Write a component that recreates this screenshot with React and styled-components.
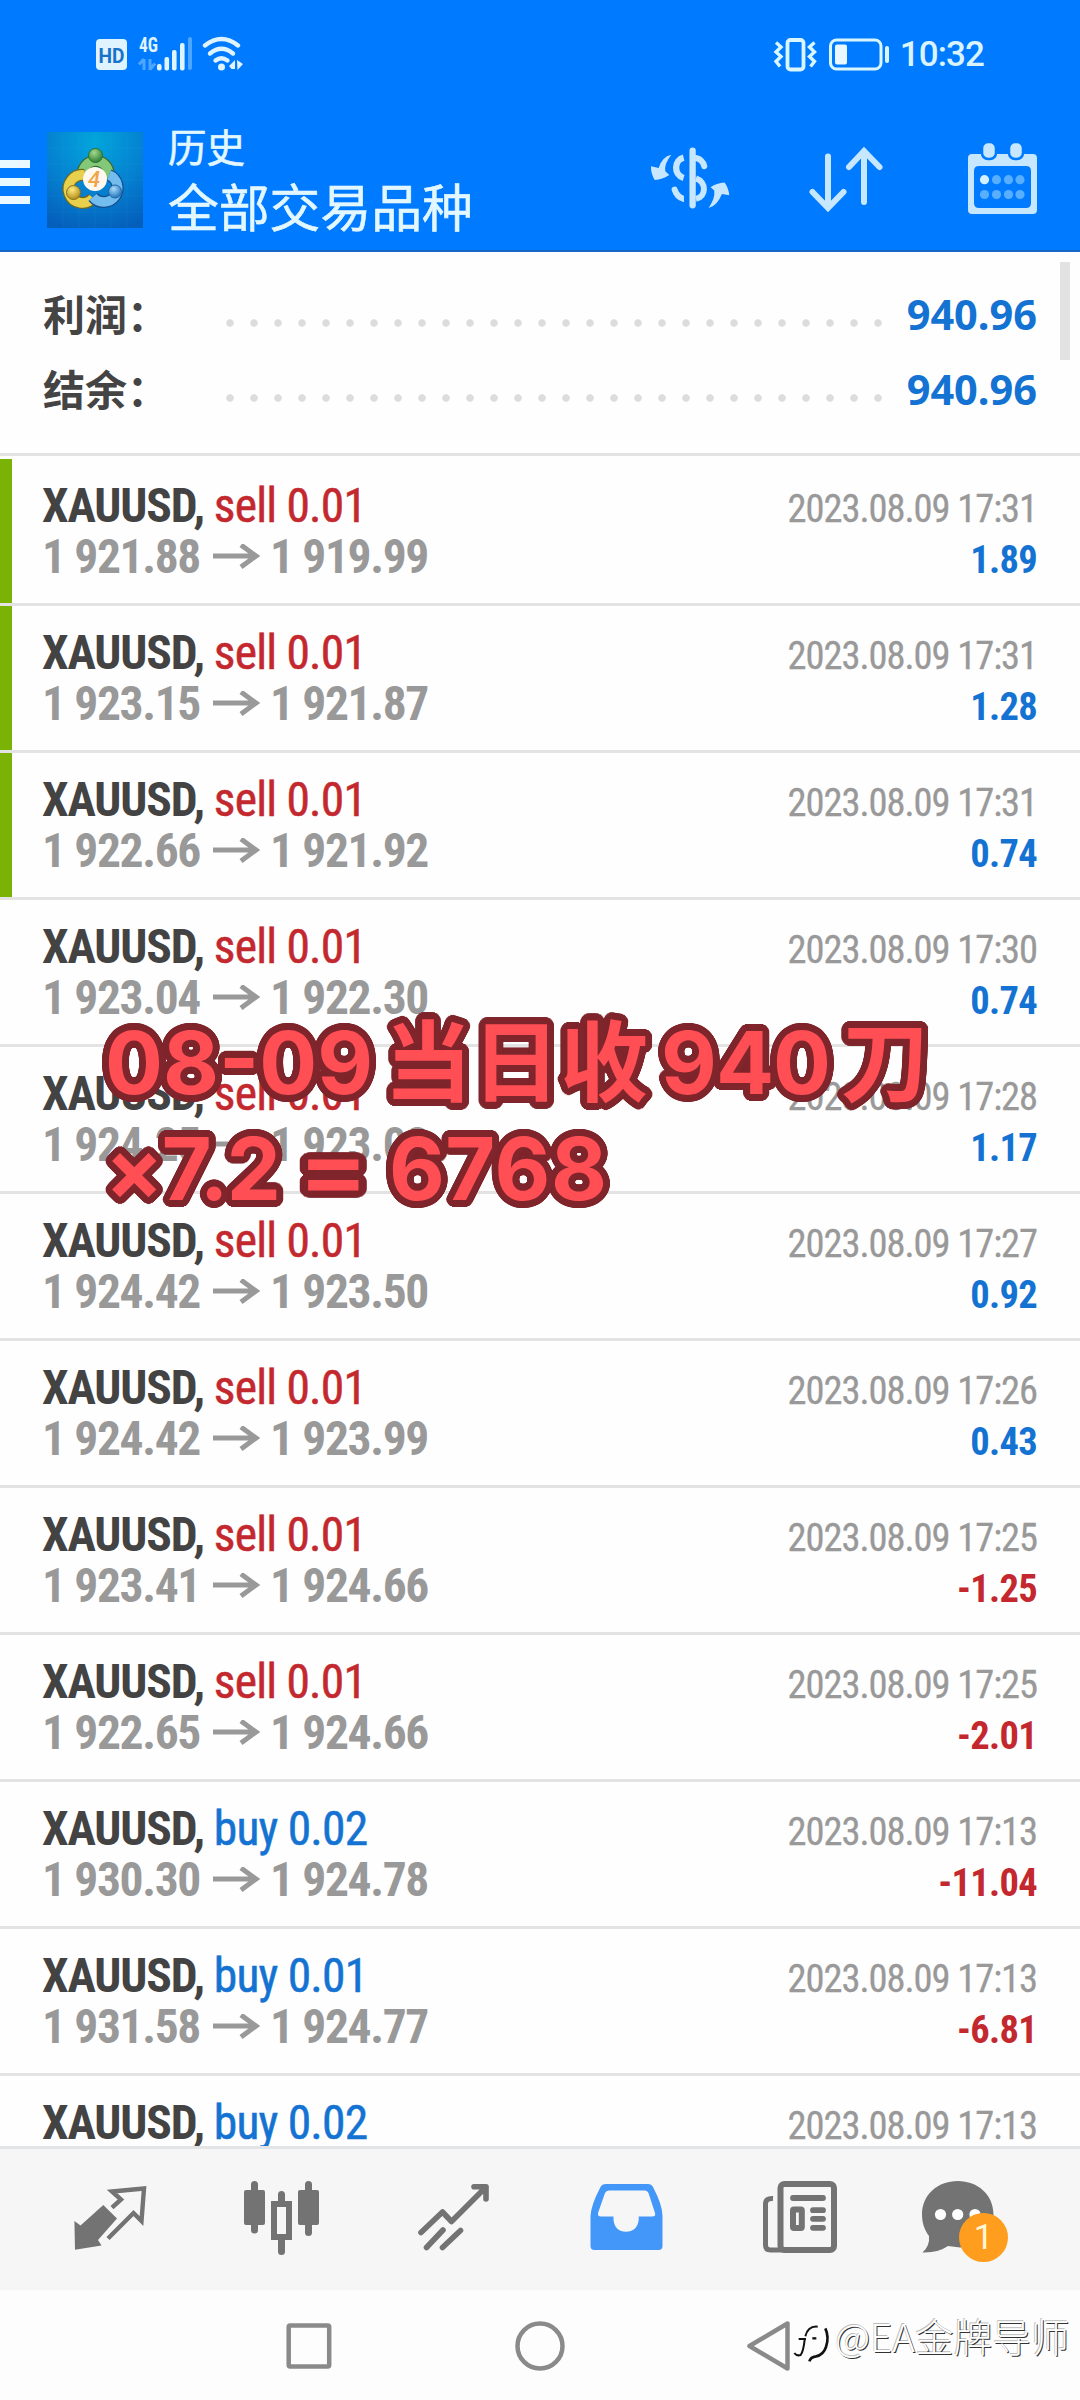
import React from 'react';
import styled, { createGlobalStyle } from 'styled-components';

const GlobalStyle = createGlobalStyle`
  * { box-sizing: border-box; }
  body {
    margin: 0;
    background: #fdfdfd;
    font-family: Roboto, 'Noto Sans CJK SC', sans-serif;
  }
  svg { display: block; flex: none; }
`;

const Screen = styled.div`
  position: relative;
  display: flex;
  flex-direction: column;
  width: 1080px;
  height: 2400px;
  overflow: hidden;
`;

const Header = styled.header`
  height: 252px;
  background: #007aff;
  border-bottom: 2px solid #1566c6;
`;

const StatusBar = styled.div`
  display: flex;
  justify-content: space-between;
  height: 108px;
  padding: 32px 96px 0 92px;
`;

const StatusGroup = styled.div`
  display: flex;
  height: 44px;
`;

const Clock = styled.span`
  margin-left: 8px;
  font-size: 35px;
  font-weight: 500;
  line-height: 46px;
  letter-spacing: -0.9px;
  color: #d9f3ff;
`;

const TitleBar = styled.div`
  display: flex;
  height: 142px;
`;

const MenuButton = styled.div`
  display: flex;
  flex-direction: column;
  gap: 10px;
  width: 30px;
  margin: 52px 17px 0 0;

  span {
    height: 8px;
    background: #eaf8ff;
  }
`;

const Logo = styled.div`
  margin-top: 24px;
`;

const Titles = styled.div`
  flex: 1;
  margin-left: 25px;
  padding-top: 11px;
  color: #e2f7ff;
  font-family: 'Noto Sans CJK SC', sans-serif;
`;

const Title = styled.div`
  font-size: ${(p) => p.$size}px;
  line-height: ${(p) => p.$line}px;
  -webkit-text-stroke: 0.6px #e2f7ff;
`;

const Actions = styled.div`
  display: flex;
  padding: 32px 38px 0 0;
`;

const Summary = styled.section`
  position: relative;
  height: 204px;
  padding: 25px 43px 0 43px;
  background: #fefefe;
  border-bottom: 3px solid #e3e3e3;
`;

const SummaryRow = styled.div`
  display: flex;
  height: 75px;
  line-height: 75px;
  font-size: 42px;
  font-weight: 700;
  font-family: 'Noto Sans CJK SC', sans-serif;
  color: #444;
`;

const SummaryLabel = styled.span`
  width: 175px;
  line-height: 72px;
`;

const Dots = styled.span`
  width: 672px;
  height: 24px;
  margin-top: 34px;
  background: radial-gradient(circle, #dcdcdc 3.3px, transparent 4.2px) 0 0 / 24px 24px;
`;

const Total = styled.span`
  flex: 1;
  text-align: right;
  font-family: 'Noto Sans', sans-serif;
  font-size: 41.5px;
  color: #1473d2;
`;

const ScrollThumb = styled.div`
  position: absolute;
  top: 10px;
  right: 10px;
  width: 10px;
  height: 98px;
  background: #e2e2e2;
`;

const DealList = styled.section`
  flex: 1;
  min-height: 0;
  padding-top: 3px;
  overflow: hidden;
  background: #fefefe;
  font-family: 'Roboto Condensed', Roboto, sans-serif;
`;

const Deal = styled.div`
  height: 147px;
  padding: 22px 43px 0 42px;
  border-bottom: 3px solid #e3e3e3;
  box-shadow: inset ${(p) => (p.$marked ? 12 : 0)}px 0 #7ab305;
`;

const Line = styled.div`
  display: flex;
  align-items: baseline;
  height: 51px;
  line-height: 50px;
  font-size: 47.5px;
  white-space: pre;
`;

const Symbol = styled.b`
  color: #434343;
  letter-spacing: -1.15px;
`;

const Volume = styled.span`
  flex: 1;
  color: ${(p) => (p.$side === 'buy' ? '#1473d2' : '#c4282f')};
  letter-spacing: -0.8px;
  -webkit-text-stroke: 0.5px;
`;

const Price = styled.b`
  color: #999;
  letter-spacing: -1.35px;
`;

const ArrowRight = styled.svg`
  margin: 0 10px 0 12px;
  fill: none;
  stroke: #999;
  stroke-width: 5;
`;

const Time = styled.span`
  margin-left: auto;
  font-size: 38.5px;
  letter-spacing: -1.05px;
  color: #999;
  -webkit-text-stroke: 0.3px;
`;

const Profit = styled.b`
  margin-left: auto;
  font-size: 38.5px;
  letter-spacing: -0.7px;
  color: ${(p) => (p.$loss ? '#c4282f' : '#1473d2')};
`;

const TabBar = styled.nav`
  display: flex;
  height: 144px;
  padding: 32px 0 0 72px;
  background: #f6f6f6;
  border-top: 3px solid #e2e4e5;
`;

const Tab = styled.div`
  position: relative;
  width: ${(p) => p.$width}px;
`;

const Badge = styled.span`
  position: absolute;
  left: 39px;
  top: 32px;
  width: 49px;
  height: 49px;
  border-radius: 50%;
  background: #ff9d1e;
  color: #fff6d8;
  font-size: 35px;
  line-height: 49px;
  text-align: center;
`;

const SystemNav = styled.div`
  display: flex;
  height: 110px;
  padding: 29px 0 0 284px;
  background: #fdfdfd;
`;

const NavKey = styled.div`
  width: ${(p) => p.$width}px;
`;

// a ring of hard shadows gives the caption an outline with round corners
const outline = (radius, color) =>
  Array.from({ length: 36 }, (_, i) => {
    const a = (i * Math.PI) / 18;
    return `${(radius * Math.cos(a)).toFixed(1)}px ${(radius * Math.sin(a)).toFixed(1)}px 0 ${color}`;
  }).join(', ');

const Caption = styled.div`
  position: absolute;
  left: 105px;
  top: 1002px;
  display: flex;
  flex-direction: column;
  gap: 7px;
  font-family: Inter, 'Noto Sans CJK SC', sans-serif;
  font-size: 86px;
  font-weight: 700;
  color: #ff4f55;
  white-space: pre;
  text-shadow: ${outline(6.8, '#7f252b')};
`;

const CaptionLine = styled.div`
  display: flex;
  align-items: baseline;
  height: 107px;
  line-height: 107px;
`;

const CaptionPart = styled.span`
  margin-left: ${(p) => p.$gap || 0}px;
  letter-spacing: ${(p) => p.$track || 0}px;
`;

const CaptionHan = styled(CaptionPart)`
  font-family: 'Noto Sans CJK SC', sans-serif;
  font-size: 88px;
`;

const CaptionSign = styled(CaptionPart)`
  transform: scaleX(1.2);
`;

const Watermark = styled.div`
  position: absolute;
  left: 793px;
  top: 2312px;
  display: flex;
  font-family: 'Noto Sans CJK SC', sans-serif;
  font-size: 38.6px;
  font-weight: 300;
  line-height: 46px;
  color: #fff;
  text-shadow: 1px 1px 0 #333, -0.6px -0.6px 0 #bbb;
`;

const deals = [
  ['sell', '0.01', '1 921.88', '1 919.99', '17:31', '1.89', true],
  ['sell', '0.01', '1 923.15', '1 921.87', '17:31', '1.28', true],
  ['sell', '0.01', '1 922.66', '1 921.92', '17:31', '0.74', true],
  ['sell', '0.01', '1 923.04', '1 922.30', '17:30', '0.74'],
  ['sell', '0.01', '1 924.25', '1 923.08', '17:28', '1.17'],
  ['sell', '0.01', '1 924.42', '1 923.50', '17:27', '0.92'],
  ['sell', '0.01', '1 924.42', '1 923.99', '17:26', '0.43'],
  ['sell', '0.01', '1 923.41', '1 924.66', '17:25', '-1.25'],
  ['sell', '0.01', '1 922.65', '1 924.66', '17:25', '-2.01'],
  ['buy', '0.02', '1 930.30', '1 924.78', '17:13', '-11.04'],
  ['buy', '0.01', '1 931.58', '1 924.77', '17:13', '-6.81'],
  ['buy', '0.02', '', '', '17:13', ''],
];

function NetworkIcons() {
  return (
    <svg width="160" height="44" viewBox="92 32 160 44" fill="#dff4ff">
      <rect x="96" y="39" width="31" height="31" rx="4" />
      <text x="111.5" y="62.5" fontSize="21" fontWeight="700" textAnchor="middle" fill="#1a73c9" textLength="26" lengthAdjust="spacingAndGlyphs" fontFamily="Roboto">HD</text>
      <text x="139" y="52" fontSize="21" fontWeight="700" textLength="19" lengthAdjust="spacingAndGlyphs" fontFamily="Roboto Condensed">4G</text>
      <path d="M144 59v11M139 64.500l5-5.500M150 70v-11M155 63.500l-5 6" stroke="#4fa6ff" strokeWidth="3" fill="none" />
      <rect x="157" y="64" width="4.600" height="6.500" rx="2" />
      <rect x="164.500" y="57" width="4.600" height="13.500" rx="2" />
      <rect x="172" y="50" width="4.600" height="20.500" rx="2" />
      <rect x="180" y="43" width="4.600" height="27.500" rx="2" />
      <rect x="188" y="37" width="4" height="33" rx="2" fill="#4fa6ff" />
      <g fill="none" stroke="#dff4ff" strokeWidth="4.400" strokeLinecap="round">
        <path d="M205 45.500q16.500-13 33 0" />
        <path d="M210 53.500q11.500-9.500 23 0" />
        <path d="M215.500 60.500q6-4.500 12 0" />
      </g>
      <circle cx="221.500" cy="67" r="3.500" />
      <path d="M229 66l6-6v9h-3.500zM237 60l6 4-5.500 6z" />
    </svg>
  );
}

function PowerIcons() {
  return (
    <svg width="120" height="44" viewBox="772 32 120 44" fill="none" stroke="#d9f6ff">
      <path d="M776 43.500l5 4.500-5 5 5 4.500-5 5 4 5M814.500 43.500l-5 4.500 5 5-5 4.500 5 5-4 5" strokeWidth="3.400" transform="translate(0 -1)" />
      <rect x="787.500" y="40" width="16" height="29.500" rx="3" strokeWidth="3.800" />
      <rect x="830.500" y="40" width="50.500" height="29" rx="6" strokeWidth="3" />
      <rect x="835" y="44.500" width="12" height="20" rx="2" fill="#e9f8ff" stroke="none" />
      <path d="M887 48v13" strokeWidth="4" strokeLinecap="round" />
    </svg>
  );
}

function AppLogo() {
  return (
    <svg width="96" height="96" viewBox="0 0 96 96">
      <defs>
        <radialGradient id="sky" cx="50%" cy="10%" r="95%">
          <stop offset="0" stopColor="#02a6dc" />
          <stop offset="0.550" stopColor="#0580d0" />
          <stop offset="1" stopColor="#045fbb" />
        </radialGradient>
        <radialGradient id="green" cx="40%" cy="30%" r="70%">
          <stop offset="0" stopColor="#a5d98b" />
          <stop offset="1" stopColor="#2b8037" />
        </radialGradient>
        <radialGradient id="gold" cx="40%" cy="30%" r="70%">
          <stop offset="0" stopColor="#ffeb82" />
          <stop offset="1" stopColor="#b58d19" />
        </radialGradient>
        <radialGradient id="blue" cx="40%" cy="30%" r="70%">
          <stop offset="0" stopColor="#a9dcfb" />
          <stop offset="1" stopColor="#2374bd" />
        </radialGradient>
      </defs>
      <rect width="96" height="96" fill="url(#sky)" />
      <path d="M0 16h96M0 32h96M0 48h96M0 64h96M0 80h96M16 0v96M32 0v96M48 0v96M64 0v96M80 0v96" stroke="#3aa5e8" strokeOpacity="0.120" />
      <g fill="none">
        <path d="M36 45a13 13 0 1 1 25 1" stroke="#3b6b2d" strokeWidth="12" />
        <path d="M36 45a13 13 0 1 1 25 1" stroke="#83c878" strokeWidth="9.500" />
        <path d="M46 66a14 14 0 1 1-9-23" stroke="#6d6a20" strokeWidth="12" />
        <path d="M46 66a14 14 0 1 1-9-23" stroke="#e8d04c" strokeWidth="9.500" />
        <path d="M62 43a14 14 0 1 1-16 22" stroke="#12508e" strokeWidth="12" />
        <path d="M62 43a14 14 0 1 1-16 22" stroke="#72bdee" strokeWidth="9.500" />
      </g>
      <circle cx="48.500" cy="23.500" r="7" fill="url(#green)" stroke="#2d6e2a" />
      <circle cx="26.500" cy="60.500" r="7" fill="url(#gold)" stroke="#83701c" />
      <circle cx="68" cy="59.500" r="6.500" fill="url(#blue)" stroke="#1f64a5" />
      <circle cx="48" cy="47" r="12" fill="#fff8ef" />
      <text x="47" y="55" fontSize="22" fontStyle="italic" fontWeight="500" textAnchor="middle" fill="#f0a44c" fontFamily="Roboto">4</text>
    </svg>
  );
}

function ActionIcons() {
  return (
    <svg width="392" height="84" viewBox="650 140 392 84" fill="none" stroke="#c6e7fd" strokeWidth="6" strokeLinecap="round">
      <g transform="translate(640 140) scale(0.333)">
        <path d="M158 32V196" strokeWidth="19" />
        <path d="M131 53C102 60 100 105 131 114" strokeWidth="19" strokeLinecap="butt" />
        <path d="M104 149Q110 170 131 177" strokeWidth="18" />
        <path d="M126 186h12v-20h-12z" fill="#007aff" stroke="none" transform="translate(6 0)" />
        <path d="M168 54Q188 58 193 79" strokeWidth="18" />
        <path d="M168 115C200 126 200 170 168 177" strokeWidth="18" strokeLinecap="butt" />
        <path d="M94 44Q66 50 56 84L33 79Q32 100 44 120Q68 118 88 105L76 94Q72 72 94 44Z" fill="#c6e7fd" stroke="none" />
        <path d="M206 204Q232 198 246 162L268 166Q266 144 254 128Q230 130 212 142L223 152Q226 176 206 204Z" fill="#c6e7fd" stroke="none" />
      </g>
      <path d="M828 156.500V207M812.500 192L828 208L843.500 192" />
      <path d="M864 202V151M849 167L864 151L879.500 167" />
      <path d="M972 154H1033Q1037 154 1037 158V210Q1037 214 1033 214H972Q968 214 968 210V158Q968 154 972 154ZM979 166Q974 166 974 171V203Q974 208 979 208H1026Q1031 208 1031 203V171Q1031 166 1026 166Z" fill="#c6e7fd" fillRule="evenodd" stroke="none" />
      <g fill="#c6e7fd" stroke="#007aff" strokeWidth="2.500">
        <rect x="982" y="142" width="14" height="17" rx="6" />
        <rect x="1009" y="142" width="14" height="17" rx="6" />
      </g>
      <g fill="#58aeff" stroke="none">
        <circle cx="984.500" cy="179.700" r="4.600" fill="#d3f1ff" />
        <circle cx="996.500" cy="179.700" r="4.600" />
        <circle cx="1008.500" cy="179.700" r="4.600" />
        <circle cx="1020" cy="179.700" r="4.600" />
        <circle cx="984.500" cy="194.500" r="4.600" />
        <circle cx="996.500" cy="194.500" r="4.600" />
        <circle cx="1008.500" cy="194.500" r="4.600" />
        <circle cx="1020" cy="194.500" r="4.600" />
      </g>
    </svg>
  );
}

function QuotesIcon() {
  return (
    <svg width="80" height="76" viewBox="72 2181 80 76">
      <path d="M103.300 2205L117 2218.500L98 2240L101.500 2245.500L75 2249.700L74.400 2221L80.500 2225.500Z" fill="#737373" />
      <path d="M112 2207.700L121 2199.500L112 2191.500L144 2188.500L141.500 2221L133.500 2213L108 2238.500" fill="none" stroke="#737373" strokeWidth="4.400" />
    </svg>
  );
}

function ChartIcon() {
  return (
    <svg width="84" height="76" viewBox="242 2181 84 76" fill="#737373">
      <rect x="244" y="2190" width="21" height="35" rx="2" />
      <rect x="298" y="2190" width="21" height="35" rx="2" />
      <path d="M271 2201h21v39h-21zM277 2207v27h9v-27z" fillRule="evenodd" />
      <path d="M254.500 2184.500v45.500M308.500 2184.500v48M281.500 2194.500v8M281.500 2240v11.500" stroke="#737373" strokeWidth="7" strokeLinecap="round" />
    </svg>
  );
}

function TradeIcon() {
  return (
    <svg width="84" height="76" viewBox="412 2181 84 76" fill="none" stroke="#737373" strokeWidth="5.600" strokeLinecap="round" strokeLinejoin="round">
      <path d="M421 2232.500L442.500 2212L451.500 2221.500L486 2187M474 2186.700H486V2199" />
      <path d="M426.500 2247.500L443 2230M442.500 2247.500L460.500 2230.500" />
    </svg>
  );
}

function HistoryIcon() {
  return (
    <svg width="84" height="76" viewBox="582 2181 84 76">
      <path
        d="M606 2184H648Q651.500 2184 653 2187Q662.500 2205 662.500 2216V2246Q662.500 2250 658.500 2250H594.500Q590.500 2250 590.500 2246V2216Q591 2205 600.500 2187Q602 2184 606 2184ZM609 2190.500Q606 2190.500 605 2193L598 2213Q597.500 2216.500 601 2216.500H613.500V2220Q615 2231.700 626 2231.700Q637 2231.700 638.700 2220V2216.500H652Q656 2216.500 655 2213L648.500 2193Q647.500 2190.500 645 2190.500Z"
        fill="#4397f8"
        fillRule="evenodd"
      />
    </svg>
  );
}

function NewsIcon() {
  return (
    <svg width="84" height="76" viewBox="756 2181 84 76" fill="none" stroke="#737373" strokeWidth="6">
      <rect x="780.500" y="2184" width="53.500" height="66" rx="4" />
      <path d="M773 2198.500Q765.500 2198 765.500 2204V2245Q765.500 2250 770.500 2250H784" strokeWidth="5" />
      <path d="M793 2198H823M813 2210.200H823M813 2218.800H823M813 2227.800H823" strokeLinecap="round" strokeWidth="5.800" />
      <rect x="793" y="2209.500" width="8.800" height="18.500" rx="1" />
    </svg>
  );
}

function ChatIcon() {
  return (
    <svg width="84" height="76" viewBox="920 2181 84 76">
      <path d="M957.700 2181C978 2181 993.500 2195 993.500 2214.500C993.500 2235 978 2247 960 2247.500L948 2246Q938 2253 922.500 2252.500Q930 2246 929 2236C924.500 2230 922 2223 922 2214.500C922 2195 937.500 2181 957.700 2181Z" fill="#737373" />
      <g fill="#fff">
        <circle cx="940.500" cy="2214.500" r="5.600" />
        <circle cx="957.700" cy="2214.500" r="5.600" />
        <circle cx="975" cy="2214.500" r="5.600" />
      </g>
    </svg>
  );
}

function AuthorMark() {
  return (
    <Watermark>
      <svg width="42" height="52" viewBox="39 9 126 156" fill="none" stroke="#111">
        <path d="M113 53Q84 50 76 82M56 90H78M74 92Q70 128 62 138Q50 142 43 132" strokeWidth="6" />
        <path d="M97 88h12" strokeWidth="7" />
        <path d="M136 58Q148 84 138 114Q130 138 108 142Q92 144 88 157" strokeWidth="8" />
      </svg>
      <span>@EA金牌导师</span>
    </Watermark>
  );
}

export default function App() {
  return (
    <Screen>
      <GlobalStyle />
      <Header>
        <StatusBar>
          <StatusGroup><NetworkIcons /></StatusGroup>
          <StatusGroup>
            <PowerIcons />
            <Clock>10:32</Clock>
          </StatusGroup>
        </StatusBar>
        <TitleBar>
          <MenuButton><span /><span /><span /></MenuButton>
          <Logo><AppLogo /></Logo>
          <Titles>
            <Title $size={38.5} $line={52}>历史</Title>
            <Title $size={50.8} $line={69}>全部交易品种</Title>
          </Titles>
          <Actions><ActionIcons /></Actions>
        </TitleBar>
      </Header>

      <Summary>
        {['利润：', '结余：'].map((label) => (
          <SummaryRow key={label}>
            <SummaryLabel>{label}</SummaryLabel>
            <Dots />
            <Total>940.96</Total>
          </SummaryRow>
        ))}
        <ScrollThumb />
      </Summary>

      <DealList>
        {deals.map(([side, lots, open, close, time, profit, marked], i) => (
          <Deal key={i} $marked={marked}>
            <Line>
              <Symbol>XAUUSD, </Symbol>
              <Volume $side={side}>{side} {lots}</Volume>
              <Time>2023.08.09 {time}</Time>
            </Line>
            {open && (
              <Line>
                <Price>{open}</Price>
                <ArrowRight width="48" height="29" viewBox="0 0 48 29">
                  <path d="M1 12H44M29 1L44 12L29 23" />
                </ArrowRight>
                <Price>{close}</Price>
                <Profit $loss={profit.startsWith('-')}>{profit}</Profit>
              </Line>
            )}
          </Deal>
        ))}
      </DealList>

      <TabBar>
        <Tab $width={170}><QuotesIcon /></Tab>
        <Tab $width={170}><ChartIcon /></Tab>
        <Tab $width={170}><TradeIcon /></Tab>
        <Tab $width={174}><HistoryIcon /></Tab>
        <Tab $width={164}><NewsIcon /></Tab>
        <Tab $width={84}>
          <ChatIcon />
          <Badge>1</Badge>
        </Tab>
      </TabBar>

      <SystemNav>
        <NavKey $width={229}>
          <svg width="50" height="54" viewBox="284 2319 50 54" fill="none" stroke="#8a8a8a" strokeWidth="4.500">
            <rect x="288.700" y="2325.500" width="40.500" height="41" rx="1.500" />
          </svg>
        </NavKey>
        <NavKey $width={231}>
          <svg width="54" height="54" viewBox="513 2319 54 54" fill="none" stroke="#8a8a8a" strokeWidth="4.500">
            <circle cx="540" cy="2346" r="22.500" />
          </svg>
        </NavKey>
        <NavKey $width={50}>
          <svg width="50" height="54" viewBox="744 2319 50 54" fill="none" stroke="#8a8a8a" strokeWidth="4.500" strokeLinejoin="round">
            <path d="M749.500 2346L787.500 2323.500V2368.500Z" />
          </svg>
        </NavKey>
      </SystemNav>

      <Caption>
        <CaptionLine>
          <CaptionPart>08-09</CaptionPart>
          <CaptionHan $gap={11}>当日收</CaptionHan>
          <CaptionPart $gap={13} $track={-1}>940</CaptionPart>
          <CaptionHan $gap={11}>刀</CaptionHan>
        </CaptionLine>
        <CaptionLine>
          <CaptionPart $track={-1.5}>×7.2</CaptionPart>
          <CaptionSign $gap={24}>=</CaptionSign>
          <CaptionPart $gap={27} $track={0.6}>6768</CaptionPart>
        </CaptionLine>
      </Caption>

      <AuthorMark />
    </Screen>
  );
}
